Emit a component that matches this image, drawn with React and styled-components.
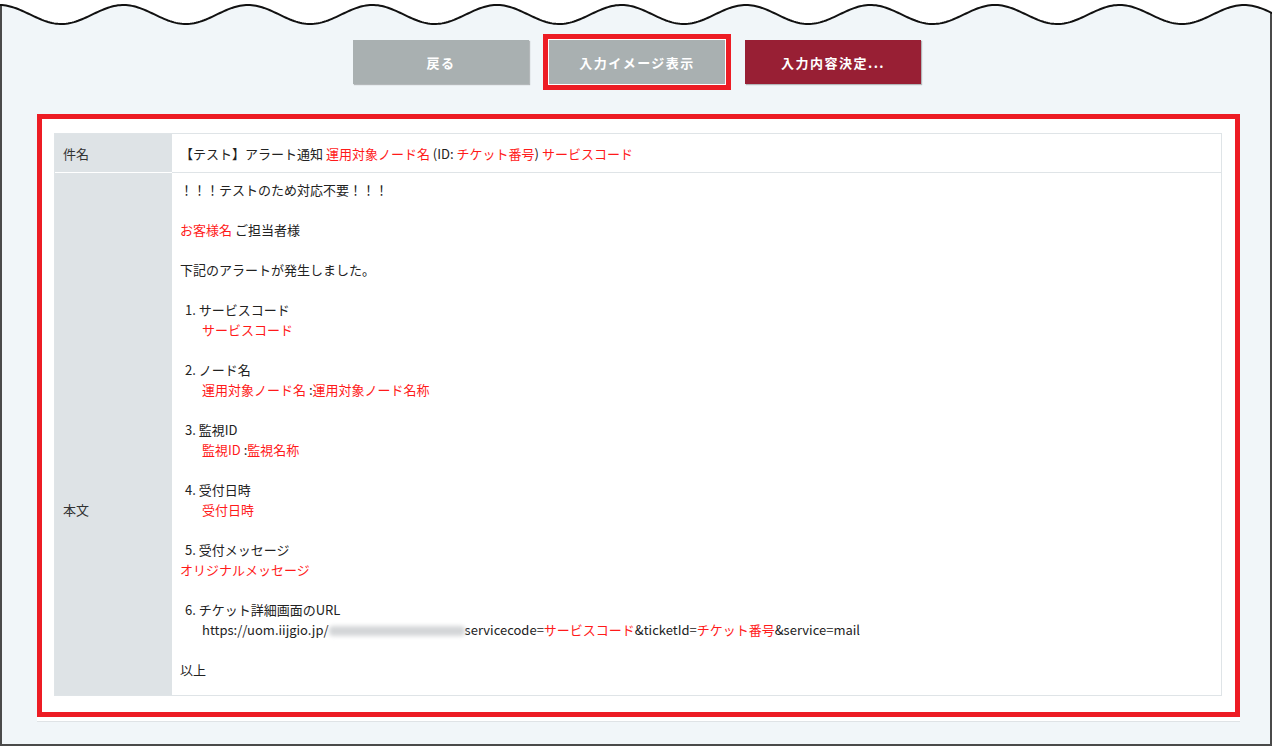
import styled, { createGlobalStyle } from "styled-components";

const GlobalStyle = createGlobalStyle`
  html, body {
    margin: 0;
    padding: 0;
    background: #ffffff;
  }
  body {
    font-family: "Noto Sans CJK JP", "Noto Sans", "Liberation Sans", sans-serif;
    font-size: 13px;
    color: #222222;
  }
`;

const FRAME_W = 1272;
const WAVE_H = 30;
const PERIOD = 124.5;

const wavePoints = () => {
  const pts = [];
  for (let x = -2; x <= FRAME_W + 2; x += 2) {
    const y = 14.5 - 9.5 * Math.cos((2 * Math.PI * (x + 1)) / PERIOD);
    pts.push(`${x},${y.toFixed(2)}`);
  }
  return pts;
};

const Wave = () => {
  const pts = wavePoints();
  return (
    <WaveSvg width={FRAME_W} height={WAVE_H} viewBox={`0 0 ${FRAME_W} ${WAVE_H}`}>
      <path d={`M-2,-2 L${pts.join(" L")} L${FRAME_W + 2},-2 Z`} fill="#ffffff" />
      <polyline points={pts.join(" ")} fill="none" stroke="#111111" strokeWidth="2" />
    </WaveSvg>
  );
};

const body = [
  { parts: ["！！！テストのため対応不要！！！"] },
  {},
  { parts: [{ red: "お客様名" }, " ご担当者様"] },
  {},
  { parts: ["下記のアラートが発生しました。"] },
  {},
  { kind: "num", parts: ["1. サービスコード"] },
  { kind: "indent", parts: [{ red: "サービスコード" }] },
  {},
  { kind: "num", parts: ["2. ノード名"] },
  { kind: "indent", parts: [{ red: "運用対象ノード名" }, " :", { red: "運用対象ノード名称" }] },
  {},
  { kind: "num", parts: ["3. 監視ID"] },
  { kind: "indent", parts: [{ red: "監視ID" }, " :", { red: "監視名称" }] },
  {},
  { kind: "num", parts: ["4. 受付日時"] },
  { kind: "indent", parts: [{ red: "受付日時" }] },
  {},
  { kind: "num", parts: ["5. 受付メッセージ"] },
  { parts: [{ red: "オリジナルメッセージ" }] },
  {},
  { kind: "num", parts: ["6. チケット詳細画面のURL"] },
  {
    kind: "indent",
    parts: [
      "https://uom.iijgio.jp/",
      { blur: true },
      "servicecode=",
      { red: "サービスコード" },
      "&ticketId=",
      { red: "チケット番号" },
      "&service=mail",
    ],
  },
  {},
  { parts: ["以上"] },
];

const renderParts = (parts = []) =>
  parts.map((p, i) => {
    if (typeof p === "string") return <span key={i}>{p}</span>;
    if (p.blur) return <Blurred key={i} />;
    return <Red key={i}>{p.red}</Red>;
  });

export default function App() {
  return (
    <>
      <GlobalStyle />
      <Frame>
        <Wave />
        <ButtonRow>
          <Button>戻る</Button>
          <Button $marked>入力イメージ表示</Button>
          <Button $primary>入力内容決定...</Button>
        </ButtonRow>
        <Panel>
          <Table>
            <Row>
              <LabelCell $first>件名</LabelCell>
              <SubjectCell>
                【テスト】アラート通知 <Red>運用対象ノード名</Red> (ID: <Red>チケット番号</Red>){" "}
                <Red>サービスコード</Red>
              </SubjectCell>
            </Row>
            <Row>
              <BodyLabel>本文</BodyLabel>
              <BodyCell>
                {body.map((line, i) => (
                  <Line key={i} $kind={line.kind}>
                    {renderParts(line.parts)}
                  </Line>
                ))}
              </BodyCell>
            </Row>
          </Table>
        </Panel>
      </Frame>
    </>
  );
}

const Frame = styled.div`
  box-sizing: border-box;
  width: ${FRAME_W}px;
  height: 746px;
  background: #f1f6f9;
  border: 2px solid #4a4a4a;
  border-top: none;
  display: flex;
  flex-direction: column;
`;

const WaveSvg = styled.svg`
  display: block;
  flex: none;
  margin: 0 -2px;
`;

const ButtonRow = styled.div`
  display: flex;
  justify-content: center;
  gap: 20px;
  margin-top: 10px;
  padding-left: 2px;
`;

const Button = styled.button`
  width: 176px;
  height: 44px;
  border: none;
  border-radius: 0;
  background: ${(p) => (p.$primary ? "#981f34" : "#a9b0b1")};
  color: #ffffff;
  font-family: "Noto Sans CJK JP", "Noto Sans", sans-serif;
  font-size: 13px;
  font-weight: bold;
  letter-spacing: 1.5px;
  box-shadow: ${(p) =>
    p.$marked
      ? "0 0 0 1px #ffffff, 0 0 0 6px #ed1c24"
      : "1px 1px 1px rgba(0, 0, 0, 0.25)"};
  cursor: pointer;
`;

const Panel = styled.div`
  box-sizing: border-box;
  width: 1203px;
  margin: 30px 0 0 35px;
  padding: 14px 13px 16px 12px;
  background: #ffffff;
  border: 5px solid #ed1c24;
  box-shadow: 0 4px 0 #ffffff, 0 5px 0 #dfe3e6;
`;

const Table = styled.div`
  border: 1px solid #dfe4e7;
`;

const Row = styled.div`
  display: grid;
  grid-template-columns: 117px 1fr;
`;

const LabelCell = styled.div`
  background: #dee3e6;
  padding: 0 8px;
  display: flex;
  align-items: center;
  color: #333333;
  border-bottom: ${(p) => (p.$first ? "1px solid #ffffff" : "none")};
`;

const BodyLabel = styled(LabelCell)`
  align-items: flex-start;
  padding-top: 327px;
  line-height: 20px;
`;

const SubjectCell = styled.div`
  height: 38px;
  padding: 0 8px;
  display: flex;
  align-items: center;
  white-space: pre;
  border-bottom: 1px solid #dfe4e7;
`;

const BodyCell = styled.div`
  padding: 7px 8px 15px;
`;

const Line = styled.div`
  height: 20px;
  line-height: 20px;
  white-space: pre;
  padding-left: ${(p) => (p.$kind === "num" ? "5px" : p.$kind === "indent" ? "22px" : "0")};
`;

const Red = styled.span`
  color: #ff1a1a;
`;

const Blurred = styled.span`
  display: inline-block;
  width: 136px;
  height: 10px;
  vertical-align: -1px;
  background: #d4d6d8;
  border-radius: 4px;
  filter: blur(2px);
`;
